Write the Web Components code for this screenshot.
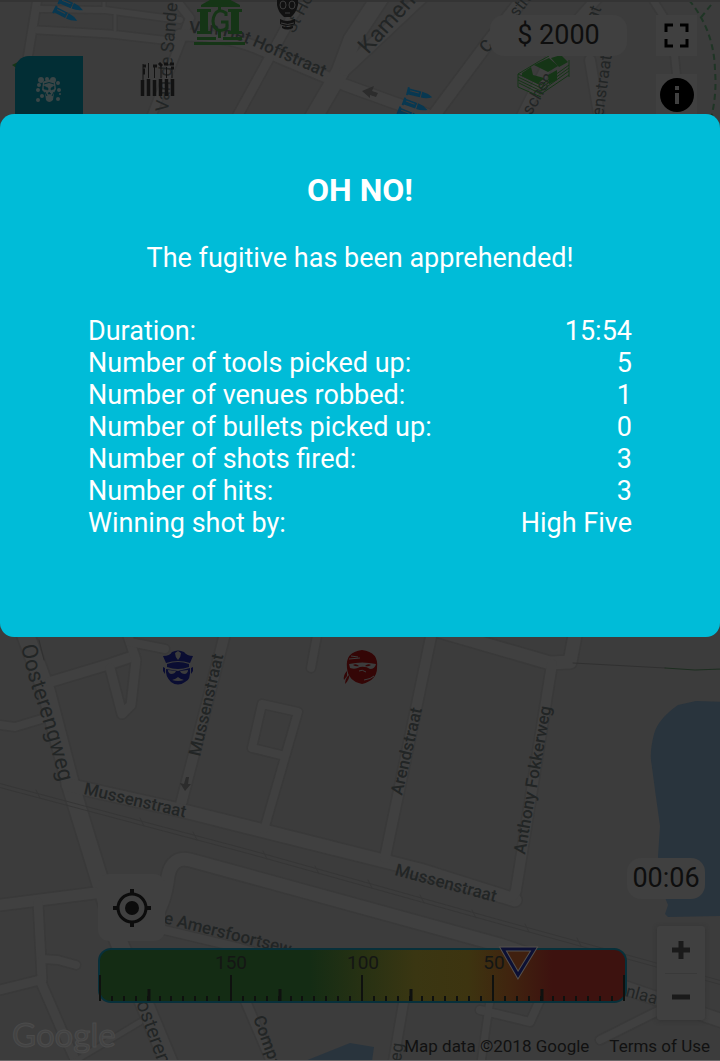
<!DOCTYPE html>
<html lang="en">
<head>
<meta charset="utf-8">
<meta name="viewport" content="width=device-width, initial-scale=1">
<title>Game over</title>
<style>
  body { margin: 0; background: #3c3c3c; font-family: Roboto, "Liberation Sans", sans-serif; }
</style>
</head>
<body>
<game-screen>
  <street-map slot="map"></street-map>
  <game-hud slot="hud" money="$ 2000" timer="00:06"></game-hud>
  <result-dialog slot="dialog">
    <span slot="title">OH NO!</span>
    <span slot="message">The fugitive has been apprehended!</span>
  </result-dialog>
</game-screen>

<script>
class BaseElement extends HTMLElement {
  connectedCallback() {
    if (this.shadowRoot) return;
    const t = document.createElement('template');
    t.innerHTML = this.render();
    this.attachShadow({ mode: 'open' }).appendChild(t.content.cloneNode(true));
  }
}

/* Stacks map, controls and dialog in a single grid cell. */
class GameScreen extends BaseElement {
  render() {
    return `<style>
      :host { display: grid; grid-template: 1fr / 1fr; min-height: 100vh; box-sizing: border-box;
        border-bottom: 1px solid #6a6667; overflow: hidden; }
      ::slotted(*) { grid-area: 1 / 1; min-width: 0; }
    </style>
    <slot name="map"></slot><slot name="hud"></slot><slot name="dialog"></slot>`;
  }
}

const ROADS = [
  // [width, path]
  [9, 'M38 -5L28 56'], [7, 'M40 9L105 10L180 20'], [8, 'M38 30L110 34L180 42'], [4, 'M104 -5V8'], [4, 'M115 15V30'],
  [9, 'M172 -5L190 18L150 120'], [12, 'M180 35Q230 35 262 50L345 85L470 130'],
  [10, 'M238 115L290 20L310 -10'], [18, 'M312 120L340 72L352 40L385 -10'], [12, 'M345 70L430 -10'],
  [13, 'M432 118L490 40L530 -10'], [8, 'M650 -5L672 30L680 110'], [11, 'M600 -5L560 40L520 120'], [11, 'M590 60L600 120'],
  [18, 'M22 625L46 690L72 790L118 940L172 1070'], [11, 'M50 682L110 664L134 656'],
  [10, 'M128 636L136 660L131 705L122 714L110 668'], [9, 'M130 642L165 649'], [9, 'M0 725L15 727L45 718'],
  [11, 'M226 630L180 808'], [14, 'M68 785L180 810L420 870L515 900'],
  [9, 'M318 630L311 668'], [9, 'M264 830L298 712L262 704L252 748L285 756'],
  [11, 'M432 632L385 858'], [14, 'M350 605L550 663L570 662L576 630'], [11, 'M552 664L524 840L516 890Q514 900 500 897'],
  [12, 'M0 905L95 893'], [10, 'M38 902L42 980'], [10, 'M0 990L40 980L66 1040L80 1070'], [9, 'M42 959L58 960L76 965'],
  [14, 'M150 925Q165 905 168 876Q172 856 190 860L500 945L740 1027'],
  [9, 'M135 923L240 948L290 962'], [10, 'M245 1000L275 1070'], [10, 'M404 1000L392 1070'],
  [9, 'M480 1010L530 1022L540 1000'], [9, 'M600 1040L700 990'], [8, 'M490 1000L480 1070'], [6, 'M60 1070L140 1022']
];

class StreetMap extends BaseElement {
  render() {
    const casing = ROADS.map(([w, d]) => `<path d="${d}" stroke-width="${w + 2}"/>`).join('');
    const fill = ROADS.map(([w, d]) => `<path d="${d}" stroke-width="${w - 1}"/>`).join('');
    const label = (x, y, r, s, t, w = 500) =>
      `<text transform="translate(${x} ${y}) rotate(${r})" font-size="${s}" font-weight="${w}">${t}</text>`;
    const bullet = (x, y, r) => `<g transform="translate(${x} ${y}) rotate(${r})">
      <path d="M0 -4H2V-3H14V3H2V4H0Z"/><path d="M15 -3Q21 -3 26 0Q21 3 15 3Z"/><path d="M3 -1H12" stroke="#3c3c3c"/></g>`;
    return `<style>
      :host { display: grid; grid-template: 1fr / 1fr; background: #3c3c3c; }
      .canvas { grid-area: 1 / 1; width: 100%; height: 100%; min-height: 0; display: block; }
      .credits { grid-area: 1 / 1; align-self: end; display: flex; align-items: center; justify-content: flex-end;
        gap: 20px; height: 28px; padding: 0 10px; font-size: 17px; line-height: 20px; color: #111; }
      a { color: inherit; text-decoration: none; }
      text { font-family: Roboto, sans-serif; fill: #222525; }
    </style>
    <svg class="canvas" viewBox="0 0 720 1060" preserveAspectRatio="xMidYMin slice" role="img" aria-label="Street map">
      <g fill="#29343d">
        <path d="M725 702L696 701L678 705Q658 719 654 734Q650 750 651 760L655 790L660 826L658 856L662 890L668 905L665 914L668 917L725 916Z"/>
        <path d="M305 1061L350 1043L374 1047L372 1061Z"/>
      </g>
      <g fill="none" stroke-linejoin="round" stroke-linecap="round">
        <g stroke="#393939">${casing}</g>
        <g stroke="#404040">${fill}</g>
        <g stroke="#363636"><path d="M-2 783L250 850L500 920L722 981"/><path d="M-2 787L250 854L500 924L722 985"/>
        <path d="M36 790l4 8M140 818l4 8M193 832l4 8M263 851l4 8M315 866l4 8M368 880l4 8M420 895l4 8M472 910l4 8M525 924l4 8M577 938l4 8"/></g>
        <path d="M573 663L665 668" stroke="#303030"/><path d="M665 668L695 670L722 669" stroke="#1d2e20"/>
        <path d="M689 0Q714 30 715 70Q717 95 711 118M711 5L699 20" stroke="#1f3525" stroke-width="2" stroke-dasharray="6 4" stroke-linecap="butt"/>
        <path d="M39 640L44 660" stroke="#303030"/>
      </g>
      <path d="M0 0H720V2H0Z" fill="#343434"/>
      <g fill="#2c2c2c"><path d="M362 91L374 86L372 91L378 93L376 97L370 95L370 98Z"/><path d="M185 791L180 783L184 784L186 777L189 777L188 784L191 784Z"/></g>
      <path id="hoff" d="M189 33L210 34Q230 36 248 44L340 84" fill="none"/>
      <path id="oost" d="M21 646Q26 672 36 700Q48 735 62 792" fill="none"/>
      <text font-size="17" font-weight="500"><textPath href="#hoff">Van Het Hoffstraat</textPath></text>
      <text font-size="22" font-weight="400"><textPath href="#oost">Oosterengweg</textPath></text>
      ${label(168, 112, -85, 18, 'Van de Sande B', 400)}
      ${label(294, 34, -62, 17, 'St Ho', 400)}
      ${label(368, 55, -48, 23, 'Kamerl', 400)}
      ${label(487, 54, -50, 17, 'C')}
      ${label(517, 18, -52, 17, 'stra', 400)}
      ${label(596, 22, -68, 17, 'at', 400)}
      ${label(531, 116, -60, 17, 'schen', 400)}
      ${label(603, 117, -82, 17, 'enstraat', 400)}
      ${label(200, 757, -77, 17, 'Mussenstraat')}
      ${label(83, 794, 13, 17, 'Mussenstraat')}
      ${label(394, 875, 15, 17, 'Mussenstraat')}
      ${label(402, 796, -77, 17, 'Arendstraat')}
      ${label(525, 855, -80, 17, 'Anthony Fokkerweg')}
      ${label(163, 923, 14, 17, 'e Amersfoortsew')}
      ${label(136, 1003, 70, 20, 'osteren', 400)}
      ${label(253, 1018, 70, 17, 'Compa')}
      ${label(401, 1062, -83, 17, 'eg', 400)}
      ${label(625, 996, 15, 17, 'nlaan', 400)}
      <text x="12" y="1047" style="font:400 33px Lato,sans-serif;fill:#434343;stroke:#4b4b4b;stroke-width:1">Google</text>

      <g fill="#083851">${bullet(59, 0, 23)}${bullet(54, 9, 27)}${bullet(407, 91, 14)}${bullet(403, 101, 20)}${bullet(398, 110, 22)}</g>
      <g fill="#153516">
        <path d="M201 5L217 -4H223L240 5V7H201Z"/>
        <path d="M197 9H211V12H208V31H211V34H197V31H200V12H197ZM228 9H242V12H239V31H242V34H228V31H231V12H228Z"/>
        <path d="M197 37H216V40H197ZM223 37H242V40H223ZM194 42H245V45H194Z"/>
        <path d="M218 2H221V10H218ZM218 31H221V38H218Z"/>
      </g>
      <path d="M226 16V13Q219 8 215 14Q211 21 215 28Q220 33 227 28V22H221" fill="none" stroke="#153516" stroke-width="3"/>
      <g fill="#111">
        <path d="M277 -4H298V5Q296 13 291 17H284Q278 12 277 5Z"/>
        <path d="M280 19Q287 23 295 19V24Q287 28 280 24ZM282 26Q288 28 293 26V28Q287 31 282 28Z"/>
      </g>
      <g fill="none" stroke="#3c3c3c"><ellipse cx="283" cy="5" rx="3" ry="4"/><ellipse cx="292" cy="5" rx="3" ry="4"/><path d="M285 13H290M281 23Q288 26 294 23"/></g>
      <g stroke="#121212" fill="none">
        <path d="M142.500 80V96M148.500 79V96M154.500 80V96M160.500 79V96M166.500 79V96M172.500 79V96" stroke-width="3.500"/>
        <path d="M143 64V80M148.500 63V78M154.500 66V78M161 66V78M166.500 67V78M172 68V78"/>
        <path d="M143 66H146M143 70H145M143 73H145M153 66H157M159 63L162 66M164 64H168M170 64H174M171 68H174" stroke-width="3"/>
      </g>
      <g fill="#153516"><path d="M522 73L531 67L533 75L544 78L538 84L522 76ZM534 65L549 58L558 66L548 72ZM551 58L561 55L568 62L559 67Z"/><path d="M548 75L557 70V80L549 84Z"/></g>
      <g fill="none" stroke="#153516"><path d="M518 74L538 62L549 56M518 74L541 85L569 65M518 77L541 88L569 68M518 80L541 91L569 71M519 83L541 94L569 75M518 74V87L541 97M569 60V77"/></g>
      <path d="M12 65L18 62V69Z" fill="#153516"/>

      <g fill="#0a0d32">
        <path d="M163 656Q170 656 172 652Q178 649 184 652Q187 656 193 656L190 663Q178 659 166 663Z"/>
        <path d="M167 664Q178 660 189 664V667Q178 671 167 667Z"/>
        <path d="M166 669L178 671L190 668Q191 680 185 682Q178 687 171 682Q165 676 166 669Z"/>
        <path d="M163 667L165 668V674L163 671ZM193 667L191 668V674L193 671Z"/>
      </g>
      <g fill="#3c3c3c"><path d="M175 653L178 651L181 653Q181 657 178 660Q175 657 175 653Z"/>
        <path d="M168 670L176 671Q175 674 171 674Q168 673 168 670ZM188 670L180 671Q181 674 185 674Q188 673 188 670Z"/>
        <path d="M172 680Q176 679 178 677Q180 679 184 680Q178 682 172 680Z"/></g>
      <g fill="#340606"><path d="M347 668Q345 652 362 650Q379 652 377 668Q377 680 362 684Q348 681 347 668Z"/><path d="M347 671Q343 675 344 680L347 676ZM349 675Q350 679 345 684Q345 680 347 677Z"/></g>
      <path d="M349 664Q362 661 376 664Q375 669 370 669Q366 666 360 667Q355 670 350 668Z" fill="#3c3c3c"/>
      <g fill="#340606"><path d="M353 665Q356 663 359 666Q356 667 353 665ZM365 666Q368 663 371 665Q368 667 365 666Z"/></g>
      <path d="M349 659L360 658M351 656L358 657M359 671Q362 669 366 672M364 680Q371 679 374 676" fill="none" stroke="#3c3c3c"/>
    </svg>
    <div class="credits"><span>Map data ©2018 Google</span><a href="#terms">Terms of Use</a></div>`;
  }
}

class DistanceGauge extends BaseElement {
  render() {
    let ticks = '';
    for (let s = 0; s < 4; s++) {
      const x = 2 + s * 131;
      for (let i = 1; i < 11; i++) ticks += `<path d="M${x + Math.round(i * 11.9)} 48V53"/>`;
      ticks += `<path d="M${x + 49} 41V53" stroke-width="3"/>`;
    }
    for (let s = 0; s < 5; s++) ticks += `<path d="M${2 + s * 131} 27V53"/>`;
    return `<style>
      :host { display: block; }
      svg { display: block; width: 100%; overflow: visible; }
      text { font: 400 19px Roboto, sans-serif; fill: #141614; text-anchor: middle; }
    </style>
    <svg viewBox="0 0 529 55" role="img" aria-label="Distance gauge">
      <defs><linearGradient id="g">
        <stop offset="0.400" stop-color="#142c14"/><stop offset="0.600" stop-color="#3a3612"/>
        <stop offset="0.700" stop-color="#3d3410"/><stop offset="0.780" stop-color="#40240f"/><stop offset="0.860" stop-color="#3d120f"/>
      </linearGradient></defs>
      <rect x="1" y="1" width="527" height="53" rx="12" fill="url(#g)" stroke="#08303a" stroke-width="2"/>
      <g stroke="#0f110f" stroke-width="2">${ticks}</g>
      <text x="133" y="21">150</text><text x="265" y="21">100</text><text x="396" y="21">50</text>
      <path d="M405 1H436L420 27Z" fill="#40200f" stroke="#55504c" stroke-width="5"/>
      <path d="M405 1H436L420 27Z" fill="none" stroke="#0c1034" stroke-width="3"/>
    </svg>`;
  }
}

class GameHud extends BaseElement {
  render() {
    return `<style>
      :host { display: flex; flex-direction: column; justify-content: space-between; }
      .top { display: flex; align-items: flex-start; padding: 15px 23px 0 15px; }
      .tile { box-sizing: border-box; width: 68px; height: 68px; margin-top: 41px; border-radius: 14px 0 0 0; background: #022e35; }
      .pill { box-sizing: border-box; height: 41px; border-radius: 14px; background: #404040; color: #0e0e0e;
        font-size: 27px; line-height: 40px; text-align: center; }
      .money { width: 137px; margin: 0 29px 0 auto; }
      .stack { display: flex; flex-direction: column; gap: 18px; }
      button { display: grid; place-items: center; border: 0; padding: 0; background: #404040; color: #0e0e0e; font: inherit; }
      .square { width: 41px; height: 41px; }
      .bottom { display: flex; align-items: flex-end; padding: 0 15px 40px 98px; }
      .left { flex: 1; padding-bottom: 17px; }
      .locate { width: 67px; height: 67px; border-radius: 11px; margin: 0 0 7px; }
      .right { display: flex; flex-direction: column; align-items: flex-end; gap: 27px; width: 78px; }
      .timer { width: 78px; }
      .zoom { width: 48px; border-radius: 3px; background: #404040; box-shadow: 0 1px 4px #333; }
      .zoom button { width: 48px; height: 47px; background: none; }
      .zoom hr { border: 0; height: 1px; background: #393939; margin: 0 8px -1px; }
      svg { display: block; }
    </style>
    <div class="top">
      <button class="tile" aria-label="Smoke">
        <svg width="28" height="28" viewBox="0 0 28 28">
          <g fill="#3a4546"><circle cx="6" cy="4" r="3"/><circle cx="12" cy="3" r="2"/><circle cx="18" cy="4" r="3"/><circle cx="23" cy="7" r="2"/><circle cx="4" cy="9" r="2"/><circle cx="3" cy="14" r="2"/><circle cx="24" cy="14" r="2"/><circle cx="3" cy="24" r="2"/><circle cx="23" cy="23" r="2"/><circle cx="25" cy="18" r="1"/><circle cx="7" cy="20" r="2"/>
          <path d="M8 6Q14 1 20 6L21 13L19 17L18 24Q14 28 11 24L10 17L7 14Z"/></g>
          <path d="M9 10L13 12V14L9 13ZM19 10L16 12V14L19 13ZM14 16L13 18H16Z" fill="#022e35" stroke="#022e35" stroke-width=".500"/>
          <path d="M9 8Q14 5 19 8M10 16L12 20M19 16L17 20" fill="none" stroke="#022e35"/>
        </svg>
      </button>
      <output class="pill money">${this.getAttribute('money')}</output>
      <div class="stack">
        <button class="square" aria-label="Full screen"><svg width="25" height="25" viewBox="0 0 25 25" fill="none" stroke="#000" stroke-width="3"><path d="M2 9V2H9M16 2H23V9M23 16V23H16M9 23H2V16"/></svg></button>
        <button class="square" aria-label="Information"><svg width="34" height="34" viewBox="0 0 34 34"><circle cx="17" cy="17" r="17"/><path d="M15 8H19V12H15ZM15 15H19V26H15Z" fill="#404040"/></svg></button>
      </div>
    </div>
    <div class="bottom">
      <div class="left">
        <button class="locate" aria-label="My location"><svg width="38" height="38" viewBox="0 0 38 38"><circle cx="19" cy="19" r="7" fill="#0c0c0c"/><circle cx="19" cy="19" r="14" fill="none" stroke="#0c0c0c" stroke-width="3"/><path d="M19 0V5M19 33V38M0 19H5M33 19H38" stroke="#0c0c0c" stroke-width="4"/></svg></button>
        <distance-gauge></distance-gauge>
      </div>
      <div class="right">
        <output class="pill timer">${this.getAttribute('timer')}</output>
        <div class="zoom">
          <button aria-label="Zoom in"><svg width="18" height="18" viewBox="0 0 18 18"><path d="M9 0V18M0 9H18" stroke="#1a1a1a" stroke-width="5"/></svg></button>
          <hr>
          <button aria-label="Zoom out"><svg width="18" height="18" viewBox="0 0 18 18"><path d="M0 9H18" stroke="#1a1a1a" stroke-width="5"/></svg></button>
        </div>
      </div>
    </div>`;
  }
}

class ResultDialog extends BaseElement {
  render() {
    const rows = [['Duration:', '15:54'], ['Number of tools picked up:', '5'], ['Number of venues robbed:', '1'],
      ['Number of bullets picked up:', '0'], ['Number of shots fired:', '3'], ['Number of hits:', '3'], ['Winning shot by:', 'High Five']];
    return `<style>
      :host { display: block; position: relative; align-self: start; margin-top: 114px; }
      section { box-sizing: border-box; padding: 56px 88px 98px; border-radius: 14px; background: #00bcd8; color: #fff; }
      h1 { margin: 0 0 32px; font-size: 32px; line-height: 40px; font-weight: 700; text-align: center; }
      p { margin: 0 0 41px; font-size: 27px; line-height: 32px; text-align: center; }
      table { width: 100%; border-collapse: collapse; font-size: 27px; line-height: 32px; }
      th, td { padding: 0; font-weight: 400; text-align: left; }
      td { text-align: right; }
    </style>
    <section role="dialog" aria-labelledby="t">
      <h1 id="t"><slot name="title"></slot></h1>
      <p><slot name="message"></slot></p>
      <table><tbody>${rows.map(([k, v]) => `<tr><th scope="row">${k}</th><td>${v}</td></tr>`).join('')}</tbody></table>
    </section>`;
  }
}

customElements.define('distance-gauge', DistanceGauge);
customElements.define('street-map', StreetMap);
customElements.define('game-hud', GameHud);
customElements.define('result-dialog', ResultDialog);
customElements.define('game-screen', GameScreen);
</script>
</body>
</html>
